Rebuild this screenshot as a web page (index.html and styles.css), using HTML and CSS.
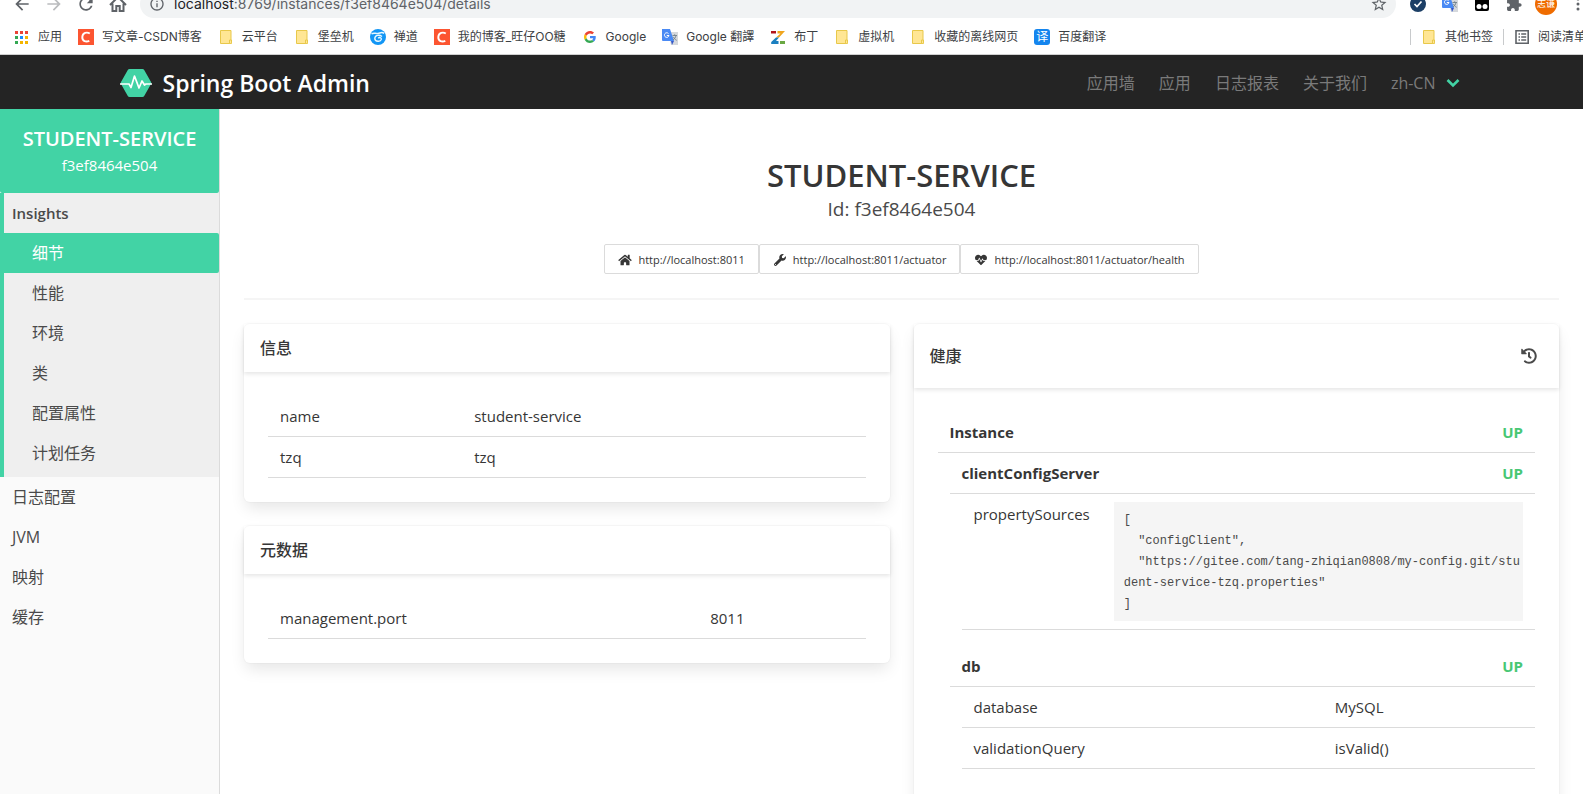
FILE: index.html
```html
<!DOCTYPE html>
<html lang="zh-CN">
<head>
<meta charset="utf-8">
<title>Spring Boot Admin</title>
<link rel="stylesheet" href="styles.css">
</head>
<body>
<svg class="defs" aria-hidden="true">
  <symbol id="folder" viewBox="0 0 16 16"><path d="M2.500 1.500h10.500v10h.5v3h-11z" fill="#ffe694" stroke="#e8c84a"/><path d="M11.500 14.500v-3.500h2v2.500l-1 1z" fill="#ffe694" stroke="#e8c84a"/></symbol>
  <symbol id="csdn" viewBox="0 0 16 16"><path d="M0 0h16v16H0z" fill="#fc5531"/><path d="M11.800 4.500C9 2.700 4.600 3.600 4.300 8c-.2 4.300 3.800 5.300 7 3.800" fill="none" stroke="#fff" stroke-width="1.900"/></symbol>
  <symbol id="translate" viewBox="0 0 16 16"><path d="M6 3h10v13H9z" fill="#d5d8dc"/><path d="M0 0h8l4 12H1a1 1 0 0 1-1-1z" fill="#4a8af4"/><path d="M9 12h3l-2 4z" fill="#3557c8"/><path d="M6.500 4.600A2.300 2.300 0 1 0 7 6.500H4.800" fill="none" stroke="#fff"/><path d="M10.500 6.500h4.500M12.700 5.300v1.200M14 6.500c-.4 2-1.400 3.500-3 4.500M11.500 8c.6 1.500 1.600 2.600 3.200 3.300" fill="none" stroke="#70808a" stroke-width=".9"/></symbol>
</svg>

<div class="app">
  <div class="browser">
    <div class="toolbar">
      <button class="tool" aria-label="后退"><svg viewBox="0 0 24 24"><path d="M20 11H7.830l5.590-5.590L12 4l-8 8 8 8 1.410-1.410L7.830 13H20v-2z"/></svg></button>
      <button class="tool tool-off" aria-label="前进"><svg viewBox="0 0 24 24"><path d="M4 11h12.170l-5.590-5.590L12 4l8 8-8 8-1.410-1.410L16.170 13H4v-2z"/></svg></button>
      <button class="tool" aria-label="刷新"><svg viewBox="0 0 24 24"><path d="M17.650 6.350C16.200 4.900 14.210 4 12 4c-4.420 0-7.990 3.580-7.990 8s3.570 8 7.990 8c3.730 0 6.840-2.550 7.730-6h-2.080c-.82 2.330-3.040 4-5.650 4-3.310 0-6-2.690-6-6s2.690-6 6-6c1.660 0 3.140.69 4.220 1.780L13 11h7V4l-2.350 2.350z"/></svg></button>
      <button class="tool" aria-label="主页"><svg viewBox="0 0 20 20"><path d="M2 11l8-8 8 8M4.500 9.500V17h3.800v-5h3.400v5h3.800V9.500" fill="none" stroke="currentColor" stroke-width="2"/></svg></button>
      <div class="omnibox">
        <svg class="info" viewBox="0 0 24 24"><path d="M11 7h2v2h-2zm0 4h2v6h-2zm1-9C6.480 2 2 6.480 2 12s4.480 10 10 10 10-4.480 10-10S17.520 2 12 2zm0 18c-4.410 0-8-3.590-8-8s3.590-8 8-8 8 3.590 8 8-3.590 8-8 8z"/></svg>
        <div class="url" role="textbox" contenteditable="true" spellcheck="false" aria-label="地址"><span class="host">localhost</span>:8769/instances/f3ef8464e504/details</div>
        <button class="star" aria-label="收藏"><svg viewBox="0 0 24 24"><path d="M22 9.240l-7.190-.62L12 2 9.190 8.630 2 9.240l5.460 4.730L5.820 21 12 17.270 18.180 21l-1.630-7.030L22 9.240zM12 15.400l-3.760 2.270 1-4.280-3.320-2.880 4.380-.38L12 6.100l1.710 4.040 4.380.38-3.320 2.880 1 4.280L12 15.400z"/></svg></button>
      </div>
      <button class="tool" aria-label="安全"><svg viewBox="0 0 20 20"><circle cx="10" cy="10" r="8" fill="#1c3f66"/><path d="M6.500 10l2.500 2.500 4.500-5" fill="none" stroke="#fff" stroke-width="1.700"/></svg></button>
      <button class="tool" aria-label="翻译"><svg viewBox="-2 -2 20 20"><use href="#translate" width="16" height="16"/></svg></button>
      <button class="tool" aria-label="脚本"><svg viewBox="0 0 20 20"><rect x="3" y="3" width="14" height="14" rx="2" fill="#000"/><circle cx="7" cy="12.500" r="2.500" fill="#fff"/><circle cx="13" cy="12.500" r="2.500" fill="#fff"/></svg></button>
      <button class="tool" aria-label="扩展程序"><svg viewBox="0 0 24 24"><path transform="translate(2 2) scale(.83)" d="M20.500 11H19V7c0-1.100-.9-2-2-2h-4V3.500C13 2.120 11.880 1 10.500 1S8 2.120 8 3.500V5H4c-1.100 0-1.990.9-1.990 2v3.800H3.500c1.490 0 2.700 1.210 2.700 2.700s-1.210 2.700-2.700 2.700H2V20c0 1.100.9 2 2 2h3.800v-1.500c0-1.490 1.210-2.700 2.700-2.700 1.490 0 2.700 1.210 2.700 2.700V22H17c1.100 0 2-.9 2-2v-4h1.500c1.380 0 2.500-1.120 2.500-2.500S21.880 11 20.500 11z"/></svg></button>
      <button class="tool avatar">志谦</button>
      <button class="tool" aria-label="菜单"><svg viewBox="0 0 20 20"><circle cx="10" cy="5" r="1.500"/><circle cx="10" cy="10" r="1.500"/><circle cx="10" cy="15" r="1.500"/></svg></button>
    </div>
    <div class="bookmarks">
      <a class="bm" href="#"><svg viewBox="0 0 16 16"><path d="M1 2h3v3H1zM6 2h3v3H6zM11 2h3v3h-3z" fill="#ea4335"/><path d="M1 7h3v3H1zM1 12h3v3H1z" fill="#34a853"/><path d="M6 7h3v3H6z" fill="#1a8cff"/><path d="M11 7h3v3h-3zM6 12h3v3H6zM11 12h3v3h-3z" fill="#f4b400"/></svg>应用</a>
      <a class="bm" href="#"><svg><use href="#csdn"/></svg>写文章-CSDN博客</a>
      <a class="bm" href="#"><svg><use href="#folder"/></svg>云平台</a>
      <a class="bm" href="#"><svg><use href="#folder"/></svg>堡垒机</a>
      <a class="bm" href="#"><svg viewBox="0 0 16 16"><circle cx="8" cy="8" r="8" fill="#1296f5"/><path d="M1.500 5C4 3 5.500 5 8 4.500S12 2.500 14 4.500" fill="none" stroke="#e8f8ff" stroke-width="1.500"/><path d="M12 7.500C9 5 4.800 6.500 4.800 9.600c.2 3.200 5.800 3.600 6.500.8.400-1.800-2.200-2.500-3-1" fill="none" stroke="#e8f8ff" stroke-width="1.400"/></svg>禅道</a>
      <a class="bm" href="#"><svg><use href="#csdn"/></svg>我的博客_旺仔OO糖</a>
      <a class="bm" href="#"><svg viewBox="-8 -8 64 64"><path fill="#ea4335" d="M24 9.500c3.540 0 6.710 1.220 9.210 3.600l6.850-6.850C35.900 2.380 30.470 0 24 0 14.620 0 6.510 5.380 2.560 13.220l7.980 6.190C12.430 13.720 17.740 9.500 24 9.500z"/><path fill="#4285f4" d="M46.980 24.550c0-1.570-.15-3.090-.38-4.550H24v9.020h12.940c-.58 2.960-2.260 5.480-4.780 7.180l7.730 6c4.510-4.180 7.090-10.360 7.090-17.650z"/><path fill="#fbbc05" d="M10.530 28.590c-.48-1.450-.76-2.990-.76-4.590s.27-3.140.76-4.590l-7.980-6.190C.92 16.460 0 20.120 0 24c0 3.880.92 7.540 2.560 10.780l7.970-6.190z"/><path fill="#34a853" d="M24 48c6.480 0 11.930-2.130 15.890-5.810l-7.730-6c-2.150 1.450-4.920 2.300-8.160 2.300-6.260 0-11.570-4.220-13.470-9.910l-7.980 6.190C6.510 42.620 14.620 48 24 48z"/></svg>Google</a>
      <a class="bm" href="#"><svg><use href="#translate"/></svg>Google 翻譯</a>
      <a class="bm" href="#"><svg viewBox="0 0 16 16"><path d="M1 2h5v2.500H1z" fill="#b3141c"/><path d="M7.500 2H15L9 8.500H6L10.500 4.500h-3z" fill="#f0a51d"/><path d="M6 8.500h3L6 12h2.500v3H1.200v-2z" fill="#1b7fc0"/><path d="M10 12h5v3h-5z" fill="#6aa843"/></svg>布丁</a>
      <a class="bm" href="#"><svg><use href="#folder"/></svg>虚拟机</a>
      <a class="bm" href="#"><svg><use href="#folder"/></svg>收藏的离线网页</a>
      <a class="bm" href="#"><span class="yi">译</span>百度翻译</a>
      <div class="bm-right">
        <a class="bm" href="#"><svg><use href="#folder"/></svg>其他书签</a>
        <a class="bm" href="#"><svg viewBox="0 0 16 16"><path d="M2 1.800h12.200v12.400H2z" fill="none" stroke="#5f6368" stroke-width="1.600"/><path d="M4.500 5h1.500M7.200 5h5M4.500 8h1.500M7.200 8h5M4.500 11h1.500M7.200 11h5" stroke="#5f6368" stroke-width="1.500"/></svg>阅读清单</a>
      </div>
    </div>
  </div>

  <header class="navbar">
    <div class="navbar-inner">
      <a class="brand" href="#"><svg viewBox="0 0 32 30"><path d="M9.500 1h13a2 2 0 0 1 1.700 1L31 14a2 2 0 0 1 0 2l-6.800 12a2 2 0 0 1-1.700 1h-13a2 2 0 0 1-1.700-1L1 16a2 2 0 0 1 0-2L7.800 2a2 2 0 0 1 1.700-1z" fill="#42d3a5"/><path d="M0 16h9l2 3.500L14.500 8l4.500 12 3-7 2.500 4 1.500-1h6" fill="none" stroke="#fff" stroke-width="1.700" stroke-linejoin="round"/></svg>Spring Boot Admin</a>
      <nav class="navlinks">
        <a href="#">应用墙</a>
        <a href="#">应用</a>
        <a href="#">日志报表</a>
        <a href="#">关于我们</a>
        <button class="lang">zh-CN<svg viewBox="0 0 14 10"><path d="M1.500 2l5.500 5.500L12.500 2" fill="none" stroke="#42d3a5" stroke-width="2.600"/></svg></button>
      </nav>
    </div>
  </header>

  <div class="body">
    <aside class="sidebar">
      <a class="instance" href="#"><strong>STUDENT-SERVICE</strong><span>f3ef8464e504</span></a>
      <div class="group">
        <a class="group-title" href="#">Insights</a>
        <a class="sub active" href="#">细节</a>
        <a class="sub" href="#">性能</a>
        <a class="sub" href="#">环境</a>
        <a class="sub" href="#">类</a>
        <a class="sub" href="#">配置属性</a>
        <a class="sub" href="#">计划任务</a>
      </div>
      <a class="side-link" href="#">日志配置</a>
      <a class="side-link" href="#">JVM</a>
      <a class="side-link" href="#">映射</a>
      <a class="side-link" href="#">缓存</a>
    </aside>

    <main class="main">
      <div class="hero">
        <h1>STUDENT-SERVICE</h1>
        <p>Id: f3ef8464e504</p>
        <div class="urls">
          <a href="#"><svg viewBox="0 0 576 512"><path d="M280.370 148.260L96 300.110V464a16 16 0 0 0 16 16l112.060-.29a16 16 0 0 0 15.920-16V368a16 16 0 0 1 16-16h64a16 16 0 0 1 16 16v95.640a16 16 0 0 0 16 16.050L464 480a16 16 0 0 0 16-16V300L295.670 148.260a12.190 12.190 0 0 0-15.300 0zM571.600 251.470L488 182.560V44.050a12 12 0 0 0-12-12h-56a12 12 0 0 0-12 12v72.610L318.470 43a48 48 0 0 0-61 0L4.340 251.470a12 12 0 0 0-1.600 16.900l25.500 31A12 12 0 0 0 45.150 301l235.220-193.740a12.190 12.190 0 0 1 15.300 0L530.900 301a12 12 0 0 0 16.900-1.600l25.500-31a12 12 0 0 0-1.700-16.930z"/></svg>http://localhost:8011</a>
          <a href="#"><svg viewBox="0 0 512 512"><path d="M507.730 109.100c-2.240-9.030-13.540-12.090-20.120-5.510l-74.360 74.360-67.880-11.310-11.310-67.880 74.360-74.360c6.620-6.620 3.430-17.900-5.660-20.160-47.380-11.740-99.550.91-136.580 37.930-39.640 39.640-50.550 97.100-34.050 147.200L18.740 402.760c-24.990 24.990-24.990 65.510 0 90.500 24.990 24.990 65.510 24.990 90.500 0l213.210-213.210c50.120 16.710 107.470 5.680 147.370-34.220 37.070-37.070 49.700-89.320 37.910-136.730zM64 472c-13.250 0-24-10.750-24-24 0-13.260 10.750-24 24-24s24 10.740 24 24c0 13.250-10.750 24-24 24z"/></svg>http://localhost:8011/actuator</a>
          <a href="#"><svg viewBox="0 0 512 512"><path d="M320.200 243.800l-49.700 99.400c-6 12.100-23.400 11.700-28.900-.6l-56.900-126.300-30 71.700H60.600l182.500 186.500c7.100 7.300 18.600 7.300 25.700 0L451.400 288H342.300l-22.100-44.200zM473.700 73.900l-2.400-2.500c-51.500-52.600-135.800-52.600-187.400 0L256 100l-27.900-28.500c-51.500-52.700-135.900-52.700-187.400 0l-2.400 2.400C-10.400 123.700-12.500 203 31 256h102.400l35.900-86.200c5.400-12.900 23.600-13.100 29.300-.4l58.200 129.300 49-97.900c5.900-11.800 22.700-11.800 28.600 0l27.600 55.200H481c43.500-53 41.400-132.300-7.300-182.100z"/></svg>http://localhost:8011/actuator/health</a>
        </div>
      </div>
      <hr>
      <div class="columns">
        <div class="column">
          <section class="card">
            <h2 class="card-head">信息</h2>
            <div class="card-body">
              <table class="info-table">
                <tr><td>name</td><td>student-service</td></tr>
                <tr><td>tzq</td><td>tzq</td></tr>
              </table>
            </div>
          </section>
          <section class="card">
            <h2 class="card-head">元数据</h2>
            <div class="card-body">
              <table class="meta-table">
                <tr><td>management.port</td><td>8011</td></tr>
              </table>
            </div>
          </section>
        </div>
        <div class="column">
          <section class="card health">
            <div class="card-head card-head-tall"><h2>健康</h2><button class="history" aria-label="历史"><svg viewBox="0 0 512 512"><path d="M504 255.531c.253 136.640-111.180 248.372-247.820 248.468-59.015.042-113.223-20.530-155.822-54.911-11.077-8.940-11.905-25.541-1.839-35.607l11.267-11.267c8.609-8.609 22.353-9.551 31.891-1.984C173.062 425.135 212.781 440 256 440c101.705 0 184-82.311 184-184 0-101.705-82.311-184-184-184-48.814 0-93.149 18.969-126.068 49.932l50.754 50.754c10.080 10.080 2.941 27.314-11.313 27.314H24c-8.837 0-16-7.163-16-16V38.627c0-14.254 17.234-21.393 27.314-11.314l49.372 49.372C129.209 34.136 189.552 8 256 8c136.810 0 247.747 110.780 248 247.531zm-180.912 78.784l9.823-12.630c8.138-10.463 6.253-25.542-4.210-33.679L288 256.349V152c0-13.255-10.745-24-24-24h-16c-13.255 0-24 10.745-24 24v135.651l65.409 50.874c10.463 8.137 25.541 6.253 33.679-4.210z"/></svg></button></div>
            <div class="card-body">
              <div class="status"><span>Instance</span><span class="up">UP</span></div>
              <div class="nested">
                <div class="status"><span>clientConfigServer</span><span class="up">UP</span></div>
                <div class="nested">
                  <table class="source-table">
                    <tr><td>propertySources</td><td><pre>[
  "configClient",
  "https://gitee.com/tang-zhiqian0808/my-config.git/student-service-tzq.properties"
]</pre></td></tr>
                  </table>
                </div>
                <div class="status status-next"><span>db</span><span class="up">UP</span></div>
                <div class="nested">
                  <table class="db-table">
                    <tr><td>database</td><td>MySQL</td></tr>
                    <tr><td>validationQuery</td><td>isValid()</td></tr>
                  </table>
                </div>
              </div>
            </div>
          </section>
        </div>
      </div>
    </main>
  </div>
</div>
</body>
</html>
```
FILE: styles.css
```css
* { box-sizing: border-box; }
body {
  margin: 0;
  background: #fff;
  color: #4a4a4a;
  font: 15px/24px "Open Sans", "Noto Sans CJK SC", sans-serif;
}
a { color: inherit; text-decoration: none; }
button { padding: 0; border: 0; background: none; color: inherit; font: inherit; cursor: pointer; }
h1, h2, p, pre { margin: 0; }
svg { fill: currentColor; flex: none; }
.defs { position: absolute; width: 0; height: 0; }
.app { display: flex; flex-direction: column; height: 100vh; overflow: hidden; }

/* Browser chrome */
.browser { flex: none; overflow: hidden; border-bottom: 1px solid #d0d0d0; color: #5f6368; }
.toolbar { display: flex; align-items: center; gap: 12px; height: 28px; margin: -10px -5px 0 12px; }
.tool { display: flex; flex: none; align-items: center; justify-content: center; width: 20px; height: 20px; }
.tool svg { width: 20px; height: 20px; }
.tool-off { color: #babcbe; }
.omnibox { display: flex; flex: 1; align-items: center; gap: 9px; height: 28px; padding: 0 8px 0 9px; border-radius: 14px; background: #f1f3f4; }
.info { width: 16px; height: 16px; }
.url { flex: 1; font-family: Inter, sans-serif; font-size: 14px; line-height: 20px; white-space: nowrap; outline: 0; }
.host { color: #202124; }
.star, .star svg { display: block; width: 18px; height: 18px; }
.avatar { width: 22px; height: 22px; margin: 0 -1px; border-radius: 50%; background: #ef6c00; color: #fff; font-size: 9px; line-height: 22px; white-space: nowrap; }
.bookmarks { display: flex; align-items: center; gap: 16px; height: 36px; padding: 2px 0 0 14px; color: #3c4043; font-family: Inter, "Noto Sans CJK SC", sans-serif; font-size: 12px; line-height: 16px; white-space: nowrap; }
.bm { display: flex; flex: none; align-items: center; gap: 8px; }
.bm svg { width: 16px; height: 16px; }
.yi { width: 16px; height: 16px; border-radius: 3px; background: #1485ee; color: #fff; text-align: center; }
.bm-right { display: flex; flex: none; margin: 0 -3px 0 auto; }
.bm-right .bm { padding: 0 10px; border-left: 1px solid #c8cacc; }
.bm-right .bm:last-child { padding-right: 0; }

/* Top navigation */
.navbar { flex: none; background: #242424; }
.navbar-inner { display: flex; align-items: center; justify-content: space-between; max-width: 1344px; height: 54px; padding-top: 1px; margin: 0 auto; }
.brand { display: flex; align-items: center; gap: 11px; color: #fff; font-size: 23px; font-weight: 600; }
.brand svg { width: 32px; height: 30px; }
.navlinks { display: flex; gap: 24px; padding-right: 4px; color: #7a7a7a; font-size: 16px; }
.lang { display: flex; align-items: center; gap: 10px; }
.lang svg { width: 14px; height: 10px; }

/* Sidebar */
.body { display: flex; flex: 1; min-height: 0; }
.sidebar { display: flex; flex: none; flex-direction: column; width: 220px; border-right: 1px solid #dbdbdb; background: #fafafa; font-size: 16px; }
.instance { display: flex; flex-direction: column; align-items: center; padding: 16px 0; border-radius: 0 0 2px 2px; background: #42d3a5; color: #fff; font-size: 15px; line-height: 24px; }
.instance strong { font-size: 20px; font-weight: 600; line-height: 28px; }
.group { display: flex; flex-direction: column; padding-bottom: 4px; border-left: 4px solid #42d3a5; background: #efefef; }
.group-title, .sub, .side-link { padding: 8px 12px; }
.group-title { padding-left: 8px; font-size: 15px; font-weight: 600; }
.sub { padding-left: 28px; }
.active { border-radius: 0 2px 2px 0; background: #42d3a5; color: #fff; }

/* Main */
.main { flex: 1; min-width: 0; padding: 48px 24px 24px; overflow: hidden; }
.hero { display: flex; flex-direction: column; align-items: center; }
.hero h1 { color: #363636; font-size: 31px; font-weight: 600; line-height: 36px; }
.hero p { margin: 4px 0 23px; font-size: 19px; line-height: 24px; }
.urls { display: flex; color: #363636; font-size: 11px; }
.urls a { display: flex; align-items: center; gap: 6px; height: 30px; padding: 1px 13px 0; border: 1px solid #dbdbdb; border-radius: 2px; }
.urls svg { width: 14px; height: 12px; }
hr { height: 2px; margin: 24px 0; border: 0; background: #f5f5f5; }
.columns { display: grid; grid-template-columns: 1fr 1fr; align-items: start; gap: 24px; }
.column { display: grid; gap: 24px; min-width: 0; }
.card { border-radius: 6px; background: #fff; box-shadow: 0 8px 16px -2px rgba(10, 10, 10, .1), 0 0 0 1px rgba(10, 10, 10, .02); }
.card-head { padding: 12px 16px; box-shadow: 0 2px 4px rgba(10, 10, 10, .1); }
.card h2 { color: #363636; font-size: 16px; font-weight: 500; line-height: 24px; }
.card-head-tall { display: flex; align-items: center; justify-content: space-between; padding: 20px 22px 20px 16px; }
.history, .history svg { display: block; width: 16px; height: 16px; }
.card-body { padding: 24px; color: #363636; }
.health .card-body { padding-bottom: 64px; }
table { width: 100%; border-collapse: collapse; table-layout: fixed; }
td { padding: 8px 12px; border-bottom: 1px solid #dbdbdb; vertical-align: top; }
.info-table td:first-child { width: 32.5%; }
.meta-table td:first-child { width: 72%; }
.db-table td:first-child { width: 63%; }
.source-table { table-layout: auto; }
pre { padding: 8px 2px 6px 10px; background: #f5f5f5; color: #4a4a4a; font: 12px/21px "Liberation Mono", monospace; white-space: pre-wrap; word-break: break-all; }
.status { display: flex; justify-content: space-between; padding: 8px 12px; border-bottom: 1px solid #dbdbdb; font-weight: 700; }
.status-next { margin-top: 16px; }
.up { color: #48c774; }
.nested { padding-left: 12px; }
```
